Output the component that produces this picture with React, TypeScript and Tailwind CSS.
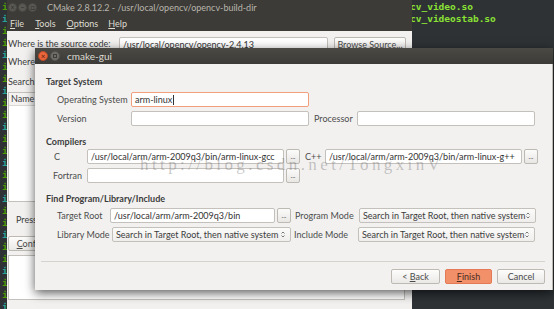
import React from "react";

const F = { fontFamily: "Lato, 'Noto Sans', sans-serif" };

function Spin() {
  return (
    <svg width="6" height="9" viewBox="0 0 6 9" className="shrink-0">
      <path d="M1.5 3.5 L3 2 L4.5 3.5" fill="none" stroke="#6a6a6a" strokeWidth="0.9" />
      <path d="M1.5 5.5 L3 7 L4.5 5.5" fill="none" stroke="#6a6a6a" strokeWidth="0.9" />
    </svg>
  );
}

function Input({ w, value, focus }: { w: string; value?: string; focus?: boolean }) {
  return (
    <div
      className={`${w} shrink-0 h-[15px] bg-white rounded-[2px] border ${
        focus ? "border-[#f0a07c]" : "border-[#c4c0bb]"
      } flex items-center pl-[3px] text-[9px] text-[#333] leading-none overflow-hidden whitespace-nowrap`}
    >
      {value}
      {focus && <span className="w-px h-[10px] bg-[#333] ml-px" />}
    </div>
  );
}

function Dots() {
  return (
    <div className="ml-[2px] shrink-0 w-[14px] h-[15px] rounded-[2px] border border-[#bdb9b3] bg-gradient-to-b from-[#fbfbfa] to-[#e9e7e4] flex items-center justify-center text-[7px] text-[#555] leading-none">
      ...
    </div>
  );
}

function Select({ w }: { w: string }) {
  return (
    <div
      className={`${w} shrink-0 h-[15px] rounded-[2px] border border-[#c4c0bb] bg-gradient-to-b from-[#fbfbfa] to-[#efeeec] flex items-center justify-between pl-[3px] pr-[4px] text-[9px] text-[#3c3c3c] leading-none whitespace-nowrap overflow-hidden`}
    >
      <span>Search in Target Root, then native system</span>
      <Spin />
    </div>
  );
}

function Btn({ w, children, primary }: { w: string; children: React.ReactNode; primary?: boolean }) {
  return (
    <div
      className={`${w} shrink-0 h-[15px] rounded-[2px] border flex items-center justify-center text-[9px] leading-none whitespace-nowrap ${
        primary
          ? "bg-[#f2906a] border-[#e37a55] text-[#4a2a1e]"
          : "bg-gradient-to-b from-[#fdfdfc] to-[#ebe9e6] border-[#bdb9b3] text-[#4a4a4a]"
      }`}
    >
      {children}
    </div>
  );
}

export default function App() {
  const termLeft = [
    "libopencv_calib3d.so",
    "libopencv_core.so",
    "libopencv_features2d.so",
    "libopencv_flann.so",
    "libopencv_gpu.so",
    "libopencv_highgui.so",
    "libopencv_imgproc.so",
    "libopencv_legacy.so",
    "libopencv_ml.so",
    "libopencv_nonfree.so",
    "libopencv_objdetect.so",
    "libopencv_ocl.so",
    "libopencv_photo.so",
    "libopencv_stitching.so",
    "libopencv_superres.so",
    "libopencv_ts.so",
    "libopencv_video.so",
    "libopencv_videostab.so",
    "libopencv_contrib.so",
    "libopencv_core.so",
    "libopencv_gpu.so",
    "libopencv_ml.so",
    "libopencv_ocl.so",
    "libopencv_ts.so",
    "libopencv_video.so",
    "libopencv_ml.so",
  ];
  const termRight = ["cv_video.so", "cv_videostab.so"];
  return (
    <div className="relative w-[554px] h-[309px] overflow-hidden bg-[#2e3235]" style={F}>
      {/* terminal */}
      <div
        className="absolute inset-0 flex flex-col pt-px text-[9.5px] leading-[12px] font-bold"
        style={{ fontFamily: "'DejaVu Sans Mono', 'Liberation Mono', monospace" }}
      >
        {termLeft.map((l, i) => (
          <div key={i} className="flex whitespace-nowrap">
            <span className={`w-[410px] shrink-0 pl-[2px] ${i % 3 === 1 ? "text-[#2aa198]" : "text-[#4e9a06]"}`}>
              {l.slice(1)}
            </span>
            <span className="text-[#8ae234]">{termRight[i] ?? ""}</span>
          </div>
        ))}
      </div>

      {/* background CMake window */}
      <div className="absolute left-[7px] top-0 w-[405px] h-[320px] flex flex-col bg-[#f2f1f0]">
        <div className="h-[15px] bg-[#3c3b37] flex items-center">
          <div className="flex items-center gap-[1px] ml-[1px]">
            {["×", "−", "□"].map((g) => (
              <div
                key={g}
                className="w-[9px] h-[9px] rounded-full bg-[#5a5954] border border-[#4a4944] flex items-center justify-center text-[7px] leading-none text-[#2e2d2a]"
              >
                {g}
              </div>
            ))}
          </div>
          <div className="ml-[10px] text-[9px] text-[#b9b5ad] leading-none whitespace-nowrap">
            CMake 2.8.12.2 - /usr/local/opencv/opencv-build-dir
          </div>
        </div>
        <div className="h-[16px] bg-[#3c3b37] flex items-center text-[9px] text-[#dfdbd2] leading-none whitespace-nowrap">
          <span className="ml-[3px]">
            <u>F</u>ile
          </span>
          <span className="ml-[11px]">
            <u>T</u>ools
          </span>
          <span className="ml-[11px]">
            <u>O</u>ptions
          </span>
          <span className="ml-[10px]">
            <u>H</u>elp
          </span>
        </div>
        <div className="flex flex-col text-[9px] text-[#3c3c3c] leading-[12px] whitespace-nowrap">
          <div className="flex items-center mt-[5px] h-[16px]">
            <span className="ml-[1px] w-[111px]">Where is the source code:</span>
            <Input w="w-[209px]" value="/usr/local/opencv/opencv-2.4.13" />
            <div className="ml-[6px]">
              <Btn w="w-[72px]">Browse Source...</Btn>
            </div>
          </div>
          <div className="ml-[1px] mt-[4px]">Where is the build the binaries:</div>
          <div className="ml-[1px] mt-[8px]">Search:</div>
          <div className="ml-[1px] mt-[4px] w-[397px] h-[110px] border border-[#c4c0bb] bg-white flex flex-col">
            <div className="h-[13px] bg-[#f4f3f2] border-b border-[#dcd9d5] flex items-center pl-[2px]">Name</div>
          </div>
          <div className="ml-[9px] mt-[12px]">Press Configure to update and display new values in red.</div>
          <div className="ml-[1px] mt-[10px] flex">
            <Btn w="w-[56px]">
              <span>
                <u>C</u>onfigure
              </span>
            </Btn>
          </div>
          <div className="ml-[1px] mt-[4px] w-[397px] h-[45px] border border-[#c4c0bb] bg-white" />
        </div>
      </div>

      {/* dialog */}
      <div className="absolute left-[35px] top-[48px] w-[518px] flex flex-col shadow-[0_3px_10px_rgba(0,0,0,0.65)]">
        <div className="h-[16px] bg-gradient-to-b from-[#4a4944] to-[#3c3b37] flex items-center">
          <div className="ml-[3px] w-[10px] h-[10px] rounded-full bg-[#e9653b] border border-[#b54a27] flex items-center justify-center text-[8px] leading-none text-[#5a1e0c]">
            ×
          </div>
          <div className="ml-[2px] w-[10px] h-[10px] rounded-full bg-[#6e6d68] border border-[#55544f] flex items-center justify-center">
            <div className="w-[4px] h-[4px] border border-[#3e3d39]" />
          </div>
          <div className="ml-[7px] text-[10px] text-[#dfdbd2] leading-none">cmake-gui</div>
        </div>
        <div className="h-[226px] bg-[#f2f1f0] border-r border-[#bcb8b2] flex flex-col text-[9px] text-[#4d4d4d] leading-[12px] whitespace-nowrap">
          <div className="mt-[12px] ml-[11px] font-bold text-[#3c3c3c]">Target System</div>
          <div className="mt-[4px] pl-[22px] flex items-center">
            <span className="w-[74px] shrink-0">Operating System</span>
            <Input w="w-[178px]" value="arm-linux" focus />
          </div>
          <div className="mt-[4px] pl-[22px] flex items-center">
            <span className="w-[74px] shrink-0">Version</span>
            <Input w="w-[178px]" />
            <span className="ml-[5px] w-[43px] shrink-0">Processor</span>
            <Input w="w-[178px]" />
          </div>
          <div className="mt-[10px] ml-[11px] font-bold text-[#3c3c3c]">Compilers</div>
          <div className="mt-[1px] pl-[19px] flex items-center">
            <span className="w-[33px] shrink-0">C</span>
            <Input w="w-[197px]" value="/usr/local/arm/arm-2009q3/bin/arm-linux-gcc" />
            <Dots />
            <span className="ml-[5px] w-[20px] shrink-0">C++</span>
            <Input w="w-[197px]" value="/usr/local/arm/arm-2009q3/bin/arm-linux-g++" />
            <Dots />
          </div>
          <div className="mt-[4px] pl-[18px] flex items-center">
            <span className="w-[34px] shrink-0">Fortran</span>
            <Input w="w-[197px]" />
            <Dots />
          </div>
          <div className="mt-[10px] ml-[11px] font-bold text-[#3c3c3c]">Find Program/Library/Include</div>
          <div className="mt-[3px] pl-[22px] flex items-center">
            <span className="w-[53px] shrink-0">Target Root</span>
            <Input w="w-[165px]" value="/usr/local/arm/arm-2009q3/bin" />
            <Dots />
            <span className="ml-[4px] w-[64px] shrink-0">Program Mode</span>
            <Select w="w-[177px]" />
          </div>
          <div className="mt-[4px] pl-[22px] flex items-center">
            <span className="w-[55px] shrink-0">Library Mode</span>
            <Select w="w-[179px]" />
            <span className="ml-[3px] w-[64px] shrink-0">Include Mode</span>
            <Select w="w-[177px]" />
          </div>
          <div className="mt-[19px] ml-[6px] w-[504px] h-px bg-[#d6d3cf]" />
          <div className="mt-[7px] pr-[7px] flex justify-end gap-[5px]">
            <Btn w="w-[49px]">
              <span>
                &lt; <u>B</u>ack
              </span>
            </Btn>
            <Btn w="w-[47px]" primary>
              <span>
                <u>F</u>inish
              </span>
            </Btn>
            <Btn w="w-[48px]">Cancel</Btn>
          </div>
        </div>
      </div>

      {/* watermark */}
      <div
        className="absolute left-[140px] top-[155px] text-[17px] leading-[20px] tracking-[3.4px] text-[rgba(110,110,110,0.38)] whitespace-nowrap pointer-events-none"
        style={{ fontFamily: "'Liberation Serif', serif" }}
      >
        http://blog.csdn.net/TongxinV
      </div>
    </div>
  );
}
